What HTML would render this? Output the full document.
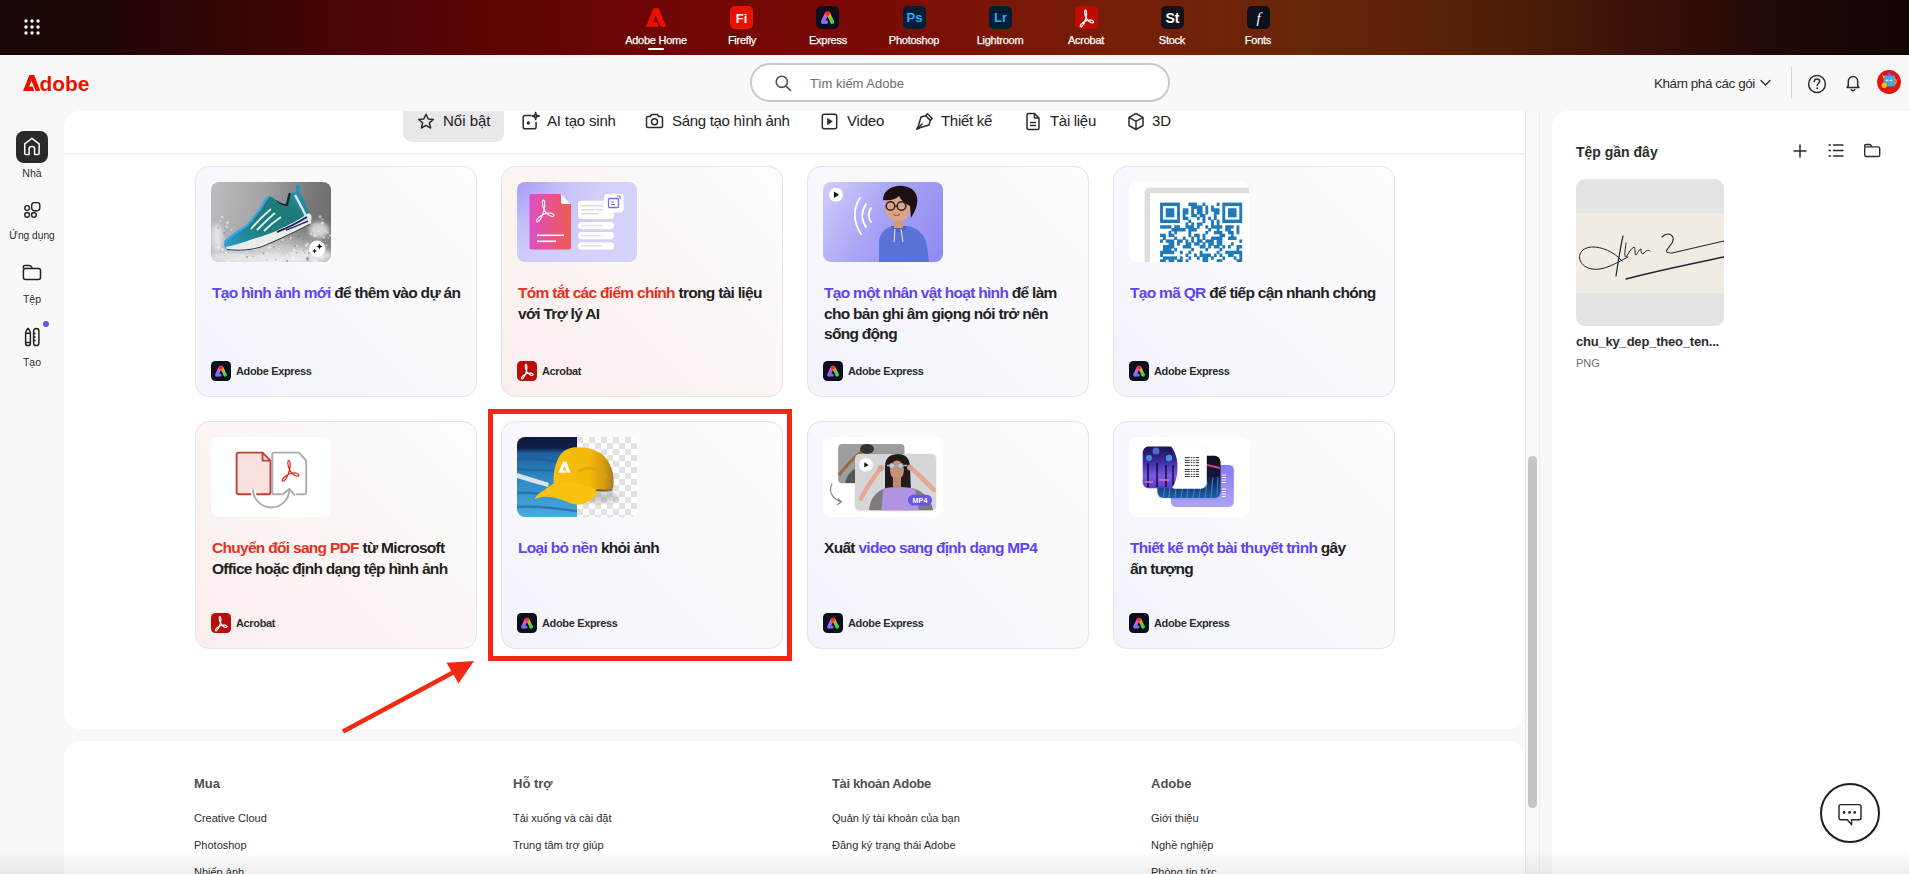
<!DOCTYPE html>
<html><head><meta charset="utf-8">
<style>
*{box-sizing:border-box;margin:0;padding:0}
html,body{width:1909px;height:874px;overflow:hidden;background:#f8f8f8;font-family:"Liberation Sans",sans-serif;color:#222}
.abs{position:absolute}
#topbar{position:absolute;left:0;top:0;width:1909px;height:55px;
background:linear-gradient(90deg,#1a0707 0px,#1e0606 100px,#300505 200px,#4a0404 350px,#5e0505 500px,#6e0606 650px,#7a0906 850px,#7a1606 1000px,#742008 1150px,#682608 1300px,#582008 1450px,#481a08 1550px,#381008 1650px,#240a06 1750px,#180606 1850px,#140505 1909px)}
.app{position:absolute;top:0;width:86px;height:55px;text-align:center;color:#fff;font-size:11px}
.app .ic{position:absolute;left:32px;top:6px;width:22px;height:22px;border-radius:5px}
.app .lb{position:absolute;left:0;right:0;top:34px;font-size:11px;letter-spacing:-0.25px;-webkit-text-stroke:0.25px #fff}
#header{position:absolute;left:0;top:55px;width:1909px;height:56px;background:#f8f8f8}
#sidebar{position:absolute;left:0;top:111px;width:64px;height:763px;background:#f8f8f8}
.side{position:absolute;left:0;width:64px;text-align:center;font-size:11px;color:#2c2c2c}
#main{position:absolute;left:64px;top:111px;width:1461px;height:618px;background:#fff;border-radius:16px 0 16px 16px}
#foot{position:absolute;left:64px;top:741px;width:1461px;height:200px;background:#fff;border-radius:16px 16px 0 0}
#right{position:absolute;left:1552px;top:111px;width:357px;height:763px;background:#fff;border-radius:16px 0 0 0}
.card{position:absolute;width:282px;border:1px solid #e3e3e8;border-radius:14px;overflow:hidden}
.card.ex{background:linear-gradient(225deg,#fdfdff 0%,#f8f8fd 50%,#f3f3fc 100%)}
.card.ac{background:linear-gradient(225deg,#fefdfd 0%,#fbf5f4 50%,#f9eeed 100%)}
.card .thumb{position:absolute;left:15px;top:15px;width:120px;height:80px;border-radius:8px;overflow:hidden}
.card .title{position:absolute;left:16px;top:116px;width:270px;white-space:nowrap;font-size:15.5px;line-height:20.5px;font-weight:bold;color:#222;letter-spacing:-0.7px}
.card .appl{position:absolute;left:15px;bottom:15px;height:20px;font-size:11px;font-weight:bold;color:#2c2c2c;line-height:20px}
.card .appl .ai{position:absolute;left:0;top:0}
.card .appl span{position:absolute;left:25px;top:0;white-space:nowrap;letter-spacing:-0.35px}
.pu{color:#5c46f3}
.rd{color:#e5311d}
.tab{position:absolute;top:111px;height:31px;font-size:15px;color:#222;line-height:20px}
.fh{position:absolute;font-size:13px;font-weight:bold;color:#505050}
.fl{position:absolute;font-size:11px;color:#2c2c2c}
</style></head>
<body>
<svg width="0" height="0" style="position:absolute">
 <defs>
  <linearGradient id="gL" x1="0" y1="0" x2="0" y2="1"><stop offset="0" stop-color="#ff4fc8"/><stop offset="1" stop-color="#7f6bff"/></linearGradient>
  <linearGradient id="gR" x1="0" y1="0" x2="0" y2="1"><stop offset="0" stop-color="#ffb000"/><stop offset="1" stop-color="#2fd35a"/></linearGradient>
 </defs>
 <symbol id="icEx" viewBox="0 0 20 20">
  <rect x="0" y="0" width="20" height="20" rx="4.5" fill="#0b0f1d"/>
  <path d="M9.2 6.8 L5.9 13.8" stroke="url(#gL)" stroke-width="3.3" stroke-linecap="round"/>
  <path d="M10.8 6.8 L14.1 13.8" stroke="url(#gR)" stroke-width="3.3" stroke-linecap="round"/>
  <path d="M6 14 L9 14" stroke="#7f6bff" stroke-width="3.2" stroke-linecap="round"/>
  <circle cx="10" cy="6.6" r="2.1" fill="#ff2a2a"/>
  <circle cx="14.1" cy="13.8" r="1.7" fill="#3ad84f"/>
 </symbol>
 <symbol id="icAc" viewBox="0 0 20 20">
  <rect x="0" y="0" width="20" height="20" rx="4.5" fill="#b80f0a"/>
  <path transform="translate(4.2,3.4) scale(0.7) translate(-71,-23.5)" d="M77.8 23.5 C76.2 23.5 76.8 28.5 78.2 32 C79.8 36 84 39.5 86.8 39.2 C88.8 39 88 36.4 85 36 C81 35.5 75.5 37.5 72.5 41 C71 42.8 71 44.8 72.8 44 C75 43 77 38 78.4 33.5 C79.5 29.5 79.4 23.5 77.8 23.5 Z" fill="none" stroke="#fff" stroke-width="1.7" stroke-linejoin="round"/>
 </symbol>
</svg>
<div id="topbar">
 <svg class="abs" style="left:24px;top:19px" width="16" height="16" viewBox="0 0 16 16" fill="#fff">
  <circle cx="2" cy="2" r="1.7"/><circle cx="8" cy="2" r="1.7"/><circle cx="14" cy="2" r="1.7"/>
  <circle cx="2" cy="8" r="1.7"/><circle cx="8" cy="8" r="1.7"/><circle cx="14" cy="8" r="1.7"/>
  <circle cx="2" cy="14" r="1.7"/><circle cx="8" cy="14" r="1.7"/><circle cx="14" cy="14" r="1.7"/>
 </svg>
 <div class="app" style="left:613px">
  <svg class="abs" style="left:33px;top:8px" width="20" height="19" viewBox="0 0 20 18.6"><path fill="#eb1000" d="M0 18.6 L7.4 0 L12.8 0 L20 18.6 L14.6 18.6 L9.7 7.6 L7.0 14 L11 14 L12.6 18.6 Z"/></svg>
  <div class="lb">Adobe Home</div>
  <div class="abs" style="left:35px;top:48px;width:16px;height:2px;background:#fff;border-radius:1px"></div>
 </div>
 <div class="app" style="left:699px">
  <div class="ic" style="background:#eb1000;left:31px;width:23px;height:23px;border-radius:5px">
   <svg class="abs" style="left:0;top:0" width="23" height="23" viewBox="0 0 23 23"><text x="11.5" y="16.5" text-anchor="middle" font-family="Liberation Sans" font-weight="bold" font-size="13" fill="#fff">Fi</text></svg>
  </div>
  <div class="lb">Firefly</div>
 </div>
 <div class="app" style="left:785px">
  <svg class="abs" style="left:31px;top:6px" width="23" height="23" viewBox="0 0 20 20"><use href="#icEx"/></svg>
  <div class="lb">Express</div>
 </div>
 <div class="app" style="left:871px">
  <div class="ic" style="background:#001e36;left:32px;width:23px;height:23px">
   <svg class="abs" style="left:0;top:0" width="23" height="23" viewBox="0 0 23 23"><text x="11.5" y="16" text-anchor="middle" font-family="Liberation Sans" font-weight="bold" font-size="13" fill="#31a8ff">Ps</text></svg>
  </div>
  <div class="lb">Photoshop</div>
 </div>
 <div class="app" style="left:957px">
  <div class="ic" style="background:#001e36;left:32px;width:23px;height:23px">
   <svg class="abs" style="left:0;top:0" width="23" height="23" viewBox="0 0 23 23"><text x="11.5" y="16" text-anchor="middle" font-family="Liberation Sans" font-weight="bold" font-size="13" fill="#31a8ff">Lr</text></svg>
  </div>
  <div class="lb">Lightroom</div>
 </div>
 <div class="app" style="left:1043px">
  <div class="ic" style="background:#c00c00;left:32px;width:23px;height:23px">
   <svg class="abs" style="left:0;top:0" width="23" height="23" viewBox="0 0 23 23"><path transform="translate(5,4.2) scale(0.8) translate(-71,-23.5)" d="M77.8 23.5 C76.2 23.5 76.8 28.5 78.2 32 C79.8 36 84 39.5 86.8 39.2 C88.8 39 88 36.4 85 36 C81 35.5 75.5 37.5 72.5 41 C71 42.8 71 44.8 72.8 44 C75 43 77 38 78.4 33.5 C79.5 29.5 79.4 23.5 77.8 23.5 Z" fill="none" stroke="#fff" stroke-width="1.6" stroke-linejoin="round"/></svg>
  </div>
  <div class="lb">Acrobat</div>
 </div>
 <div class="app" style="left:1129px">
  <div class="ic" style="background:#12141a;left:32px;width:23px;height:23px">
   <svg class="abs" style="left:0;top:0" width="23" height="23" viewBox="0 0 23 23"><text x="11.5" y="16.5" text-anchor="middle" font-family="Liberation Sans" font-weight="bold" font-size="14" fill="#fff">St</text></svg>
  </div>
  <div class="lb">Stock</div>
 </div>
 <div class="app" style="left:1215px">
  <div class="ic" style="background:#0c0f1c;left:32px;width:23px;height:23px">
   <svg class="abs" style="left:0;top:0" width="23" height="23" viewBox="0 0 23 23"><text x="11.5" y="17" text-anchor="middle" font-family="Liberation Serif" font-style="italic" font-size="15" fill="#fff">f</text></svg>
  </div>
  <div class="lb">Fonts</div>
 </div>
</div>
<div id="header">
 <svg class="abs" style="left:23px;top:20px" width="67" height="17" viewBox="0 0 67 17">
  <path fill="#eb1000" d="M0 16 L6.3 0 L11.2 0 L17.3 16 L12.7 16 L8.4 5.8 L6.3 11.4 L9.6 11.4 L11.2 16 Z"/>
  <text x="16.5" y="16" font-family="Liberation Sans" font-weight="bold" font-size="21" fill="#eb1000" textLength="50" lengthAdjust="spacingAndGlyphs">dobe</text>
 </svg>
 <div class="abs" style="left:750px;top:8px;width:420px;height:39px;border:2px solid #c9c9c9;border-radius:20px;background:#fff"></div>
 <svg class="abs" style="left:775px;top:20px" width="17" height="17" viewBox="0 0 17 17"><circle cx="6.8" cy="6.8" r="5.6" fill="none" stroke="#505050" stroke-width="1.6"/><path d="M10.8 10.8 L15.5 15.5" stroke="#505050" stroke-width="1.7" stroke-linecap="round"/></svg>
 <div class="abs" style="left:810px;top:21px;font-size:13px;color:#6d6d6d;line-height:16px">Tìm kiếm Adobe</div>
 <div class="abs" style="left:1654px;top:21px;font-size:13.5px;color:#2c2c2c;line-height:16px;letter-spacing:-0.45px">Khám phá các gói</div>
 <svg class="abs" style="left:1760px;top:24px" width="11" height="8" viewBox="0 0 11 8"><path d="M1 1.5 L5.5 6 L10 1.5" fill="none" stroke="#2c2c2c" stroke-width="1.4" stroke-linecap="round" stroke-linejoin="round"/></svg>
 <div class="abs" style="left:1791px;top:12px;width:1px;height:32px;background:#d5d5d5"></div>
 <svg class="abs" style="left:1807px;top:19px" width="20" height="20" viewBox="0 0 20 20"><circle cx="10" cy="10" r="8.4" fill="none" stroke="#2c2c2c" stroke-width="1.5"/><path d="M7.3 7.6 C7.3 5.9 8.5 5 10 5 C11.6 5 12.7 6 12.7 7.4 C12.7 9.2 10.2 9.4 10.2 11.5" fill="none" stroke="#2c2c2c" stroke-width="1.5" stroke-linecap="round"/><circle cx="10.2" cy="14.3" r="1" fill="#2c2c2c"/></svg>
 <svg class="abs" style="left:1844px;top:19px" width="18" height="18" viewBox="0 0 18 18"><path d="M3 13.5 L4.3 11.8 L4.3 7.5 C4.3 4.7 6.3 2.6 9 2.6 C11.7 2.6 13.7 4.7 13.7 7.5 L13.7 11.8 L15 13.5 Z" fill="none" stroke="#2c2c2c" stroke-width="1.5" stroke-linejoin="round"/><path d="M7.2 15.5 C7.5 16.4 8.2 16.8 9 16.8 C9.8 16.8 10.5 16.4 10.8 15.5" fill="none" stroke="#2c2c2c" stroke-width="1.4" stroke-linecap="round"/></svg>
 <svg class="abs" style="left:1877px;top:15px" width="24" height="24" viewBox="0 0 24 24">
  <circle cx="12" cy="12" r="11.9" fill="#e8120c"/>
  <path d="M7.5 5.5 L16.5 5.5 C17.5 5.5 18 6 18 7 L18 15 C18 16 17.5 16.5 16.5 16.5 L8 16.5 C7 16.5 6.5 16 6.5 15 L6.5 6.5 C6.5 6 7 5.5 7.5 5.5 Z" fill="#49a6da"/>
  <path d="M10 5.8 C10 3.5 11 2.5 12.2 2.5 C13.4 2.5 14.5 3.5 14.5 5.8 Z" fill="#6a58f0"/>
  <path d="M9 11 C9.5 10 10.5 10 11 11 M13 11 C13.5 10 14.5 10 15 11" stroke="#efe6ff" stroke-width="1.3" fill="none"/>
  <path d="M4.5 15 C4.5 13 6 12.5 7.5 12.8 C9.5 13.2 10.5 15 9.5 17 C8.5 18.5 5.5 18.5 4.8 16.8 Z" fill="#f5c400"/>
  <path d="M5.2 4.5 L8 7 L6.2 8.5 Z" fill="#f5c400"/>
  <path d="M18 9 C19.5 10 19.5 13 18 14" stroke="#f5c400" stroke-width="1.2" fill="none"/>
 </svg>
</div>
<div id="sidebar">
 <div class="abs" style="left:16px;top:20px;width:32px;height:32px;border-radius:8px;background:#2a2a2a"></div>
 <svg class="abs" style="left:16px;top:20px" width="32" height="32" viewBox="0 0 32 32"><path d="M8.7 12.9 L15.9 7.3 L23.1 12.9 L23.1 22.2 C23.1 23 22.6 23.5 21.8 23.5 L18.6 23.5 L18.6 17.4 C18.6 16.1 17.6 15.4 15.9 15.4 C14.2 15.4 13.1 16.1 13.1 17.4 L13.1 23.5 L10 23.5 C9.2 23.5 8.7 23 8.7 22.2 Z" fill="none" stroke="#fff" stroke-width="1.5" stroke-linejoin="round"/></svg>
 <div class="side" style="top:56px;font-size:10.5px">Nhà</div>
 <svg class="abs" style="left:16px;top:85px" width="32" height="28" viewBox="0 0 32 28" fill="none" stroke="#222" stroke-width="1.4"><circle cx="11.1" cy="12" r="2.35"/><rect x="15.7" y="6.6" width="8.1" height="8.1" rx="2.6"/><circle cx="11.1" cy="18.9" r="2.35"/><circle cx="17.9" cy="18.9" r="2.35"/></svg>
 <div class="side" style="top:119px;font-size:10.2px">Ứng dụng</div>
 <svg class="abs" style="left:16px;top:147px" width="32" height="28" viewBox="0 0 32 28" fill="none" stroke="#222" stroke-width="1.5" stroke-linejoin="round"><path d="M7.4 10.6 L7.4 8.6 C7.4 7.8 7.9 7.4 8.7 7.4 L13.3 7.4 C14.3 7.4 15 7.9 15.5 8.8 L16.3 10.6"/><rect x="7.4" y="10.6" width="17.1" height="10.9" rx="2"/></svg>
 <div class="side" style="top:182px;font-size:10.5px">Tệp</div>
 <svg class="abs" style="left:16px;top:211px" width="36" height="28" viewBox="0 0 36 28" fill="none" stroke="#222" stroke-width="1.5" stroke-linejoin="round"><path d="M9.6 21.5 L9.6 11 C9.6 9.2 10.6 7.7 12 6.6 C13.4 7.7 14.4 9.2 14.4 11 L14.4 21.5 C14.4 22.8 13.4 23.6 12 23.6 C10.6 23.6 9.6 22.8 9.6 21.5 Z M9.6 11.2 L14.4 11.2 M9.6 20.4 L14.4 20.4"/><path d="M11.2 7.6 L12.6 6.2" stroke-width="1.8"/><rect x="17.6" y="6.6" width="5.3" height="17" rx="2.65"/><path d="M17.6 11.4 L19.6 11.4 M17.6 15 L19.6 15 M17.6 18.6 L19.6 18.6"/></svg>
 <div class="abs" style="left:43px;top:210px;width:6px;height:6px;border-radius:3px;background:#6052ee"></div>
 <div class="side" style="top:245px;font-size:10.5px">Tạo</div>
</div>
<div id="main">
 <div class="abs" style="left:0;top:42px;width:1461px;height:2px;background:linear-gradient(#ececec,#f7f7f7)"></div>
 <div class="abs" style="left:339px;top:0;width:101px;height:31px;background:#e8e8ea;border-radius:0 0 9px 9px"></div>
</div>
<!-- tabs -->
<svg class="abs" style="left:417px;top:113px" width="18" height="17" viewBox="0 0 18 17"><path d="M9 1.3 L11.2 6 L16.3 6.5 L12.4 9.9 L13.6 15 L9 12.3 L4.4 15 L5.6 9.9 L1.7 6.5 L6.8 6 Z" fill="none" stroke="#2c2c2c" stroke-width="1.5" stroke-linejoin="round"/></svg>
<div class="tab" style="left:443px">Nổi bật</div>
<svg class="abs" style="left:521px;top:111px" width="20" height="20" viewBox="0 0 20 20" fill="none" stroke="#2c2c2c" stroke-width="1.5" stroke-linejoin="round"><path d="M10.5 4.5 L4 4.5 C3 4.5 2.2 5.3 2.2 6.3 L2.2 16 C2.2 17 3 17.8 4 17.8 L13.3 17.8 C14.3 17.8 15.1 17 15.1 16 L15.1 11"/><path d="M14.6 1.5 L15.4 4.2 L18.2 5 L15.4 5.8 L14.6 8.5 L13.8 5.8 L11 5 L13.8 4.2 Z"/><circle cx="7.3" cy="12" r="0.9" fill="#2c2c2c"/></svg>
<div class="tab" style="left:547px;letter-spacing:-0.2px">AI tạo sinh</div>
<svg class="abs" style="left:645px;top:113px" width="19" height="16" viewBox="0 0 19 16" fill="none" stroke="#2c2c2c" stroke-width="1.5" stroke-linejoin="round"><path d="M1.5 5 C1.5 4 2.2 3.5 3 3.5 L5.3 3.5 L6.6 1.5 L12.4 1.5 L13.7 3.5 L16 3.5 C16.8 3.5 17.5 4 17.5 5 L17.5 13 C17.5 14 16.8 14.5 16 14.5 L3 14.5 C2.2 14.5 1.5 14 1.5 13 Z"/><circle cx="9.5" cy="8.7" r="3"/></svg>
<div class="tab" style="left:672px;letter-spacing:-0.3px">Sáng tạo hình ảnh</div>
<svg class="abs" style="left:821px;top:113px" width="17" height="17" viewBox="0 0 17 17"><rect x="1.3" y="1.3" width="14.4" height="14.4" rx="2" fill="none" stroke="#2c2c2c" stroke-width="1.5"/><path d="M6.2 4.8 L11.8 8.5 L6.2 12.2 Z" fill="#2c2c2c"/></svg>
<div class="tab" style="left:847px;letter-spacing:-0.2px">Video</div>
<svg class="abs" style="left:915px;top:112px" width="19" height="19" viewBox="0 0 19 19" fill="none" stroke="#2c2c2c" stroke-width="1.5" stroke-linejoin="round"><path d="M12.5 1.8 L17.2 6.5 L15.3 8.4 L14 13 L5.5 15.5 L1.8 17.2 L3.5 13.5 L6 5 L10.6 3.7 Z"/><path d="M1.8 17.2 L7.5 11.5"/><path d="M10.6 3.7 L15.3 8.4"/></svg>
<div class="tab" style="left:941px;letter-spacing:-0.3px">Thiết kế</div>
<svg class="abs" style="left:1025px;top:112px" width="16" height="19" viewBox="0 0 16 19" fill="none" stroke="#2c2c2c" stroke-width="1.5" stroke-linejoin="round"><path d="M2 3 C2 2.2 2.6 1.5 3.5 1.5 L9.5 1.5 L14 6 L14 16 C14 16.8 13.4 17.5 12.5 17.5 L3.5 17.5 C2.6 17.5 2 16.8 2 16 Z"/><path d="M9.5 1.5 L9.5 6 L14 6"/><path d="M5 10.5 L11 10.5 M5 13.5 L11 13.5"/></svg>
<div class="tab" style="left:1050px;letter-spacing:-0.3px">Tài liệu</div>
<svg class="abs" style="left:1127px;top:112px" width="18" height="19" viewBox="0 0 18 19" fill="none" stroke="#2c2c2c" stroke-width="1.5" stroke-linejoin="round"><path d="M9 1.5 L16 5.3 L16 13.5 L9 17.5 L2 13.5 L2 5.3 Z"/><path d="M2 5.3 L9 9.3 L16 5.3 M9 9.3 L9 17.5"/></svg>
<div class="tab" style="left:1152px">3D</div>

<!-- cards row 1 -->
<div class="card ex" style="left:195px;top:166px;height:231px">
 <div class="thumb" style="background:linear-gradient(100deg,#bdbdc0 0%,#a4a4a7 40%,#7a7a7d 75%,#6a6a6c 100%)">
  <svg width="120" height="80" viewBox="0 0 120 80">
   <defs>
    <radialGradient id="spl" cx="0.55" cy="1.05" r="0.75"><stop offset="0" stop-color="#f2f2f2"/><stop offset="0.45" stop-color="#d0d0d2" stop-opacity="0.85"/><stop offset="1" stop-color="#a0a0a2" stop-opacity="0"/></radialGradient>
    <linearGradient id="shu" x1="0" y1="1" x2="1" y2="0"><stop offset="0" stop-color="#2a9fe0"/><stop offset="0.35" stop-color="#1e7f7c"/><stop offset="0.7" stop-color="#1f7a78"/><stop offset="1" stop-color="#2aa3df"/></linearGradient>
   </defs>
   <rect x="0" y="25" width="120" height="55" fill="url(#spl)"/>
   <g filter="url(#blr)" fill="#ececee" opacity="0.8"><ellipse cx="6" cy="56" rx="6" ry="14"/><ellipse cx="20" cy="76" rx="22" ry="6"/><ellipse cx="108" cy="48" rx="10" ry="8"/><ellipse cx="100" cy="74" rx="22" ry="7"/><ellipse cx="60" cy="78" rx="30" ry="5"/></g><filter id="blr"><feGaussianBlur stdDeviation="2.2"/></filter>
   <g><circle cx="28.6" cy="57.2" r="0.8" fill="#f4f4f6" opacity="0.68"/><circle cx="1.6" cy="71.9" r="0.7" fill="#f4f4f6" opacity="0.48"/><circle cx="119.5" cy="53.5" r="1.4" fill="#f4f4f6" opacity="0.61"/><circle cx="76.2" cy="73.4" r="1.0" fill="#f4f4f6" opacity="0.76"/><circle cx="91.0" cy="59.6" r="0.8" fill="#f4f4f6" opacity="0.37"/><circle cx="103.9" cy="53.6" r="1.3" fill="#f4f4f6" opacity="0.83"/><circle cx="85.7" cy="76.1" r="0.9" fill="#f4f4f6" opacity="0.79"/><circle cx="53.4" cy="76.8" r="1.5" fill="#f4f4f6" opacity="0.40"/><circle cx="16.3" cy="40.8" r="1.6" fill="#f4f4f6" opacity="0.59"/><circle cx="42.1" cy="59.3" r="1.1" fill="#f4f4f6" opacity="0.85"/><circle cx="81.8" cy="76.4" r="1.4" fill="#f4f4f6" opacity="0.90"/><circle cx="103.3" cy="78.2" r="1.5" fill="#f4f4f6" opacity="0.66"/><circle cx="99.8" cy="58.7" r="0.7" fill="#f4f4f6" opacity="0.38"/><circle cx="102.5" cy="79.5" r="0.5" fill="#f4f4f6" opacity="0.79"/><circle cx="35.3" cy="68.4" r="1.4" fill="#f4f4f6" opacity="0.37"/><circle cx="105.7" cy="79.0" r="1.0" fill="#f4f4f6" opacity="0.90"/><circle cx="23.7" cy="50.4" r="1.1" fill="#f4f4f6" opacity="0.44"/><circle cx="5.1" cy="73.4" r="0.8" fill="#f4f4f6" opacity="0.88"/><circle cx="107.6" cy="48.9" r="1.0" fill="#f4f4f6" opacity="0.64"/><circle cx="77.3" cy="59.8" r="1.1" fill="#f4f4f6" opacity="0.69"/><circle cx="112.9" cy="55.4" r="0.9" fill="#f4f4f6" opacity="0.75"/><circle cx="117.3" cy="56.1" r="1.1" fill="#f4f4f6" opacity="0.36"/><circle cx="49.8" cy="59.0" r="0.4" fill="#f4f4f6" opacity="0.69"/><circle cx="75.3" cy="53.3" r="1.2" fill="#f4f4f6" opacity="0.54"/><circle cx="84.8" cy="66.9" r="0.4" fill="#f4f4f6" opacity="0.38"/><circle cx="81.1" cy="78.2" r="0.7" fill="#f4f4f6" opacity="0.60"/><circle cx="44.3" cy="59.8" r="0.8" fill="#f4f4f6" opacity="0.56"/><circle cx="68.3" cy="66.8" r="0.8" fill="#f4f4f6" opacity="0.47"/><circle cx="96.5" cy="41.9" r="0.6" fill="#f4f4f6" opacity="0.59"/><circle cx="100.0" cy="51.9" r="1.4" fill="#f4f4f6" opacity="0.44"/><circle cx="40.4" cy="62.5" r="1.5" fill="#f4f4f6" opacity="0.60"/><circle cx="96.8" cy="71.9" r="0.6" fill="#f4f4f6" opacity="0.50"/><circle cx="96.9" cy="62.1" r="1.4" fill="#f4f4f6" opacity="0.54"/><circle cx="15.6" cy="44.6" r="1.4" fill="#f4f4f6" opacity="0.50"/><circle cx="41.6" cy="50.8" r="0.9" fill="#f4f4f6" opacity="0.58"/><circle cx="110.5" cy="37.8" r="0.4" fill="#f4f4f6" opacity="0.87"/><circle cx="105.6" cy="79.3" r="0.9" fill="#f4f4f6" opacity="0.87"/><circle cx="111.3" cy="41.1" r="1.3" fill="#f4f4f6" opacity="0.81"/><circle cx="79.6" cy="56.0" r="0.7" fill="#f4f4f6" opacity="0.54"/><circle cx="97.2" cy="32.3" r="1.5" fill="#f4f4f6" opacity="0.73"/><circle cx="110.9" cy="74.8" r="1.5" fill="#f4f4f6" opacity="0.67"/><circle cx="1.6" cy="67.3" r="0.6" fill="#f4f4f6" opacity="0.51"/><circle cx="79.5" cy="56.2" r="0.9" fill="#f4f4f6" opacity="0.87"/><circle cx="30.3" cy="73.1" r="1.0" fill="#f4f4f6" opacity="0.78"/><circle cx="64.2" cy="70.8" r="0.6" fill="#f4f4f6" opacity="0.79"/><circle cx="110.6" cy="70.3" r="1.4" fill="#f4f4f6" opacity="0.35"/><circle cx="75.4" cy="73.1" r="0.5" fill="#f4f4f6" opacity="0.50"/><circle cx="32.2" cy="56.4" r="0.9" fill="#f4f4f6" opacity="0.61"/><circle cx="6.6" cy="36.3" r="0.5" fill="#f4f4f6" opacity="0.39"/><circle cx="117.0" cy="72.7" r="0.5" fill="#f4f4f6" opacity="0.63"/><circle cx="42.2" cy="62.3" r="1.1" fill="#f4f4f6" opacity="0.55"/><circle cx="22.9" cy="46.4" r="0.5" fill="#f4f4f6" opacity="0.66"/><circle cx="9.6" cy="38.9" r="0.8" fill="#f4f4f6" opacity="0.68"/><circle cx="96.1" cy="61.1" r="0.9" fill="#f4f4f6" opacity="0.55"/><circle cx="59.5" cy="65.1" r="0.9" fill="#f4f4f6" opacity="0.73"/><circle cx="64.3" cy="64.8" r="0.5" fill="#f4f4f6" opacity="0.58"/><circle cx="51.1" cy="74.0" r="1.5" fill="#f4f4f6" opacity="0.56"/><circle cx="107.7" cy="69.5" r="0.7" fill="#f4f4f6" opacity="0.61"/><circle cx="14.8" cy="70.7" r="1.2" fill="#f4f4f6" opacity="0.84"/><circle cx="95.1" cy="63.4" r="1.3" fill="#f4f4f6" opacity="0.66"/><circle cx="12.4" cy="59.4" r="0.4" fill="#f4f4f6" opacity="0.43"/><circle cx="11.0" cy="35.0" r="1.5" fill="#f4f4f6" opacity="0.45"/><circle cx="2.8" cy="72.1" r="0.5" fill="#f4f4f6" opacity="0.81"/><circle cx="80.8" cy="71.8" r="1.5" fill="#f4f4f6" opacity="0.67"/><circle cx="95.8" cy="31.8" r="1.3" fill="#f4f4f6" opacity="0.63"/><circle cx="89.9" cy="76.7" r="0.5" fill="#f4f4f6" opacity="0.53"/><circle cx="67.7" cy="71.4" r="0.7" fill="#f4f4f6" opacity="0.45"/><circle cx="30.0" cy="60.8" r="1.3" fill="#f4f4f6" opacity="0.57"/><circle cx="42.0" cy="50.9" r="0.5" fill="#f4f4f6" opacity="0.63"/><circle cx="116.8" cy="50.6" r="1.3" fill="#f4f4f6" opacity="0.44"/><circle cx="82.9" cy="67.8" r="1.2" fill="#f4f4f6" opacity="0.63"/><circle cx="58.0" cy="62.1" r="1.5" fill="#f4f4f6" opacity="0.43"/><circle cx="11.5" cy="67.4" r="1.5" fill="#f4f4f6" opacity="0.63"/><circle cx="53.2" cy="65.9" r="0.6" fill="#f4f4f6" opacity="0.50"/><circle cx="23.9" cy="59.3" r="0.8" fill="#f4f4f6" opacity="0.48"/><circle cx="82.9" cy="77.7" r="0.8" fill="#f4f4f6" opacity="0.74"/><circle cx="49.6" cy="72.7" r="1.1" fill="#f4f4f6" opacity="0.50"/><circle cx="20.7" cy="48.0" r="0.8" fill="#f4f4f6" opacity="0.78"/><circle cx="17.2" cy="79.6" r="1.0" fill="#f4f4f6" opacity="0.68"/><circle cx="56.2" cy="71.7" r="1.4" fill="#f4f4f6" opacity="0.66"/><circle cx="57.8" cy="66.0" r="1.4" fill="#f4f4f6" opacity="0.57"/><circle cx="88.0" cy="78.0" r="1.0" fill="#f4f4f6" opacity="0.48"/><circle cx="28.2" cy="65.9" r="1.2" fill="#f4f4f6" opacity="0.88"/><circle cx="102.5" cy="42.1" r="0.6" fill="#f4f4f6" opacity="0.49"/><circle cx="22.5" cy="65.2" r="1.4" fill="#f4f4f6" opacity="0.84"/><circle cx="30.6" cy="73.3" r="0.8" fill="#f4f4f6" opacity="0.58"/><circle cx="11.1" cy="71.7" r="0.8" fill="#f4f4f6" opacity="0.55"/><circle cx="69.6" cy="63.8" r="0.4" fill="#f4f4f6" opacity="0.53"/><circle cx="52.3" cy="54.3" r="0.7" fill="#f4f4f6" opacity="0.67"/><circle cx="114.6" cy="49.5" r="1.1" fill="#f4f4f6" opacity="0.42"/><circle cx="33.0" cy="63.3" r="0.5" fill="#f4f4f6" opacity="0.84"/><circle cx="109.1" cy="34.8" r="1.5" fill="#f4f4f6" opacity="0.56"/><circle cx="92.7" cy="67.9" r="0.8" fill="#f4f4f6" opacity="0.72"/><circle cx="78.5" cy="70.3" r="0.7" fill="#f4f4f6" opacity="0.76"/><circle cx="115.4" cy="63.6" r="1.0" fill="#f4f4f6" opacity="0.41"/><circle cx="86.2" cy="63.9" r="1.1" fill="#f4f4f6" opacity="0.45"/><circle cx="77.5" cy="61.5" r="0.6" fill="#f4f4f6" opacity="0.84"/><circle cx="111.8" cy="37.1" r="0.8" fill="#f4f4f6" opacity="0.75"/><circle cx="71.7" cy="57.7" r="1.2" fill="#f4f4f6" opacity="0.60"/><circle cx="8.2" cy="65.8" r="1.3" fill="#f4f4f6" opacity="0.65"/><circle cx="31.9" cy="58.4" r="1.4" fill="#707074" opacity="0.5"/><circle cx="5.1" cy="62.7" r="0.7" fill="#707074" opacity="0.5"/><circle cx="92.3" cy="57.4" r="0.8" fill="#707074" opacity="0.5"/><circle cx="48.4" cy="64.0" r="1.3" fill="#707074" opacity="0.5"/><circle cx="42.3" cy="74.6" r="0.6" fill="#707074" opacity="0.5"/><circle cx="32.5" cy="48.5" r="0.6" fill="#707074" opacity="0.5"/><circle cx="93.5" cy="70.5" r="0.7" fill="#707074" opacity="0.5"/><circle cx="22.7" cy="59.6" r="1.2" fill="#707074" opacity="0.5"/><circle cx="97.9" cy="71.2" r="1.1" fill="#707074" opacity="0.5"/><circle cx="17.6" cy="58.9" r="0.7" fill="#707074" opacity="0.5"/><circle cx="63.3" cy="64.9" r="0.7" fill="#707074" opacity="0.5"/><circle cx="30.0" cy="72.4" r="0.5" fill="#707074" opacity="0.5"/><circle cx="96.4" cy="76.2" r="1.4" fill="#707074" opacity="0.5"/><circle cx="46.0" cy="64.3" r="1.1" fill="#707074" opacity="0.5"/><circle cx="76.0" cy="79.2" r="1.2" fill="#707074" opacity="0.5"/><circle cx="35.9" cy="75.1" r="1.0" fill="#707074" opacity="0.5"/><circle cx="72.2" cy="70.4" r="0.5" fill="#707074" opacity="0.5"/><circle cx="92.5" cy="68.2" r="1.0" fill="#707074" opacity="0.5"/><circle cx="62.8" cy="61.1" r="0.7" fill="#707074" opacity="0.5"/><circle cx="63.5" cy="46.3" r="1.0" fill="#707074" opacity="0.5"/><circle cx="77.5" cy="60.5" r="1.1" fill="#707074" opacity="0.5"/><circle cx="115.1" cy="76.2" r="0.6" fill="#707074" opacity="0.5"/><circle cx="95.1" cy="66.8" r="0.6" fill="#707074" opacity="0.5"/><circle cx="43.2" cy="53.2" r="0.6" fill="#707074" opacity="0.5"/><circle cx="64.7" cy="77.5" r="0.8" fill="#707074" opacity="0.5"/><circle cx="104.5" cy="69.3" r="0.6" fill="#707074" opacity="0.5"/><circle cx="103.0" cy="66.0" r="1.4" fill="#707074" opacity="0.5"/><circle cx="85.9" cy="70.9" r="0.8" fill="#707074" opacity="0.5"/><circle cx="96.8" cy="77.6" r="1.4" fill="#707074" opacity="0.5"/><circle cx="52.4" cy="71.5" r="1.0" fill="#707074" opacity="0.5"/><circle cx="13.1" cy="46.5" r="0.6" fill="#707074" opacity="0.5"/><circle cx="24.0" cy="50.6" r="1.0" fill="#707074" opacity="0.5"/><circle cx="83.9" cy="63.8" r="0.9" fill="#707074" opacity="0.5"/><circle cx="77.9" cy="55.7" r="1.0" fill="#707074" opacity="0.5"/><circle cx="90.9" cy="59.1" r="0.7" fill="#707074" opacity="0.5"/><circle cx="107.9" cy="70.2" r="0.9" fill="#707074" opacity="0.5"/><circle cx="44.5" cy="63.5" r="1.1" fill="#707074" opacity="0.5"/><circle cx="26.9" cy="45.1" r="0.7" fill="#707074" opacity="0.5"/><circle cx="94.0" cy="50.0" r="1.0" fill="#707074" opacity="0.5"/><circle cx="23.4" cy="52.3" r="0.7" fill="#707074" opacity="0.5"/><circle cx="48.4" cy="50.9" r="0.5" fill="#707074" opacity="0.5"/><circle cx="13.2" cy="50.9" r="1.0" fill="#707074" opacity="0.5"/><circle cx="7.2" cy="45.8" r="0.9" fill="#707074" opacity="0.5"/><circle cx="48.9" cy="69.6" r="0.6" fill="#707074" opacity="0.5"/><circle cx="48.4" cy="58.9" r="0.5" fill="#707074" opacity="0.5"/><circle cx="115.9" cy="52.7" r="0.6" fill="#707074" opacity="0.5"/><circle cx="57.0" cy="50.8" r="1.1" fill="#707074" opacity="0.5"/><circle cx="41.6" cy="49.3" r="0.6" fill="#707074" opacity="0.5"/><circle cx="87.3" cy="54.6" r="1.3" fill="#707074" opacity="0.5"/><circle cx="55.8" cy="77.7" r="0.8" fill="#707074" opacity="0.5"/></g>
   <path d="M13.3 63.2 C13 60 14 58 15 57.5 C22 52 30 48 36.6 43 C42 37 46 31 49.4 27.5 C52 22 55 17 57.7 14.6 C60 14.5 63 16.5 64 17.4 C68 20 72 22 75 22 C76 18 77 13 77.8 11 L85 10.5 L85 2.7 L89.7 3.7 L88.5 11 C92 14 95 22 97 28 C99 31 100.5 33 100.7 34.8 L99.8 42.1 C90 47 80 52 73.2 54.9 C62 60 52 65 45.8 67.7 C36 69 26 69.5 18.3 68.7 C15.5 67.5 13.8 65.5 13.3 63.2 Z" fill="url(#shu)"/>
   <path d="M14 60 C22 52 30 48 36.6 43 C42 37 46 31 49.4 27.5 C52 22 55 17 57.7 14.6" stroke="#2fa6ea" stroke-width="2.2" fill="none"/>
   <path d="M64 17.4 C68 20 72 22 75 22 C76 18 77 13 77.8 11 L80 11 C79 15 78 20 77 24 C72 24 67 21 64 17.4 Z" fill="#1b2430"/>
   <path d="M15 65 C25 63 35 59 45 56 C55 53 60 51 64 49.4 C76 44 88 38 96 32 C98 30 100 32 100.7 34.8 L99.8 42.1 C90 47 80 52 73.2 54.9 C62 60 52 65 45.8 67.7 C36 69 26 69.5 18.3 68.7 C16 67.8 15 66 15 64 Z" fill="#e9ebec"/>
   <path d="M66 50 C76 46 88 40 96 35" stroke="#1b2660" stroke-width="2" fill="none"/>
   <path d="M75 48 C84 45 92 41 97 39" stroke="#22305a" stroke-width="1.4" fill="none"/>
   <path d="M16 67.5 C28 69 40 68 50 65 C62 60 78 53 99 42" stroke="#2a3440" stroke-width="1" fill="none"/>
   <path d="M40 47 C46 40 54 32 60 27 M46 48 C52 42 58 36 64 31 M53 49 C58 44 64 39 70 35" stroke="#e4eef0" stroke-width="1.8" fill="none"/>
   <path d="M84 13 C88 20 92 28 95 34" stroke="#dfe6e8" stroke-width="2.5" fill="none"/>
   <circle cx="106.2" cy="66.8" r="8.2" fill="#fff"/>
   <path d="M108.5 61.5 L109.4 63.6 L111.5 64.5 L109.4 65.4 L108.5 67.5 L107.6 65.4 L105.5 64.5 L107.6 63.6 Z" fill="#111"/>
   <path d="M103.5 66.5 L104.2 68.3 L106 69 L104.2 69.7 L103.5 71.5 L102.8 69.7 L101 69 L102.8 68.3 Z" fill="#111"/>
  </svg>
 </div>
 <div class="title"><span class="pu">Tạo hình ảnh mới</span> để thêm vào dự án</div>
 <div class="appl"><svg class="ai" width="20" height="20"><use href="#icEx"/></svg><span>Adobe Express</span></div>
</div>

<div class="card ac" style="left:501px;top:166px;height:231px">
 <div class="thumb" style="background:radial-gradient(circle at 0% 0%,#a79cf7 0%,#c4bff8 30%,#d3d0f9 60%,#d5d3fa 100%)">
  <svg width="120" height="80" viewBox="0 0 120 80">
   <defs><linearGradient id="pdg" x1="0" y1="0" x2="1" y2="0"><stop offset="0" stop-color="#df4fc6"/><stop offset="1" stop-color="#f05a52"/></linearGradient></defs>
   <path d="M14.5 12 L44 12 L54 22 L54 65.5 C54 66.8 53 67.5 52 67.5 L14.5 67.5 C13.3 67.5 12.5 66.8 12.5 65.5 L12.5 14 C12.5 12.8 13.3 12 14.5 12 Z" fill="url(#pdg)"/>
   <path d="M44 12 L54 22 L46 22 C44.8 22 44 21.2 44 20 Z" fill="#fff"/>
   <path transform="translate(19.2,18) scale(1.05) translate(-71,-23.5)" d="M77.8 23.5 C76.2 23.5 76.8 28.5 78.2 32 C79.8 36 84 39.5 86.8 39.2 C88.8 39 88 36.4 85 36 C81 35.5 75.5 37.5 72.5 41 C71 42.8 71 44.8 72.8 44 C75 43 77 38 78.4 33.5 C79.5 29.5 79.4 23.5 77.8 23.5 Z" fill="none" stroke="#fff" stroke-width="1.1" stroke-linejoin="round"/>
   <rect x="20" y="52.5" width="27" height="1.6" fill="#fff"/><rect x="20" y="58.5" width="19" height="1.6" fill="#fff"/>
   <rect x="61" y="18.7" width="36" height="18.3" rx="3" fill="#fff" opacity="0.95"/>
   <rect x="64" y="23" width="22" height="1.5" fill="#dedede"/><rect x="64" y="27" width="22" height="1.5" fill="#dedede"/><rect x="64" y="31" width="18" height="1.5" fill="#dedede"/>
   <rect x="61" y="39.9" width="36" height="7.3" rx="3.6" fill="#fff"/><rect x="64" y="42.8" width="22" height="1.5" fill="#e2e2e2"/>
   <rect x="61" y="50" width="36" height="7.3" rx="3.6" fill="#fff"/><rect x="64" y="52.9" width="20" height="1.5" fill="#e2e2e2"/>
   <rect x="61" y="60.2" width="36" height="7.3" rx="3.6" fill="#fff"/><rect x="64" y="63.1" width="21" height="1.5" fill="#e2e2e2"/>
   <rect x="87" y="11.8" width="19.7" height="18.8" rx="4" fill="#fff"/>
   <rect x="91.5" y="16.5" width="10" height="9" rx="1" fill="none" stroke="#7b6cf0" stroke-width="1.3"/>
   <path d="M94 20 L97 20 M94 22.5 L98 22.5 M100 14 L103 14 L103 17" stroke="#7b6cf0" stroke-width="1.1" fill="none"/>
  </svg>
 </div>
 <div class="title"><span class="rd">Tóm tắt các điểm chính</span> trong tài liệu<br>với Trợ lý AI</div>
 <div class="appl"><svg class="ai" width="20" height="20"><use href="#icAc"/></svg><span>Acrobat</span></div>
</div>

<div class="card ex" style="left:807px;top:166px;height:231px">
 <div class="thumb" style="background:linear-gradient(120deg,#d2cdfa 0%,#a9a4f5 45%,#8d8af2 100%)">
  <svg width="120" height="80" viewBox="0 0 120 80">
   <circle cx="13" cy="12.7" r="7" fill="#fff"/><path d="M11 9.5 L16 12.7 L11 15.9 Z" fill="#111"/>
   <path d="M37 16 C30 26 30 40 38 52 M43 22 C38 30 38 38 43 45 M48 26 C45 31 45 36 48 40" stroke="#fff" stroke-width="1.8" fill="none" stroke-linecap="round"/>
   <path d="M56 80 L56 60 C56 52 62 46 70 44 L85 44 C95 46 103 54 104 64 L106 80 Z" fill="#5b72d6"/>
   <path d="M68 44 C72 52 80 52 84 44" fill="#4d63c4"/>
   <path d="M72 47 L71 60 M78 47 L80 60" stroke="#e8e0d8" stroke-width="1.1"/>
   <rect x="71" y="36" width="9" height="10" fill="#d49a78"/>
   <ellipse cx="75" cy="25" rx="13" ry="14" fill="#dca282"/>
   <path d="M60 18 C60 8 70 3 80 4 C90 5 96 12 94 22 C93 28 90 32 88 36 L87 24 C82 22 78 18 76 14 C72 18 66 19 60 18 Z" fill="#1d1010"/>
   <circle cx="67.5" cy="24" r="4.3" fill="none" stroke="#222" stroke-width="1.5"/><circle cx="78.5" cy="24" r="4.3" fill="none" stroke="#222" stroke-width="1.5"/>
   <path d="M71.8 24 L74.2 24" stroke="#222" stroke-width="1.2"/>
   <path d="M70 32 C72 34 75 34 77 32" stroke="#8a4a3a" stroke-width="1" fill="none"/>
  </svg>
 </div>
 <div class="title"><span class="pu">Tạo một nhân vật hoạt hình</span> để làm<br>cho bản ghi âm giọng nói trở nên<br>sống động</div>
 <div class="appl"><svg class="ai" width="20" height="20"><use href="#icEx"/></svg><span>Adobe Express</span></div>
</div>

<div class="card ex" style="left:1113px;top:166px;height:231px">
 <div class="thumb" style="background:#fff">
  <svg width="120" height="80" viewBox="0 0 120 80">
   <path d="M15.6 82 L15.6 10.5 C15.6 7.5 17.5 5.5 20.5 5.5 L120 5.5 L120 11 L21 11 L21 82 Z" fill="#dedede"/>
   <g fill="#1f7ab8"><rect x="31.10" y="20.60" width="19.81" height="3.43"/><rect x="59.40" y="20.60" width="8.49" height="3.43"/><rect x="73.55" y="20.60" width="2.83" height="3.43"/><rect x="87.70" y="20.60" width="2.83" height="3.43"/><rect x="93.36" y="20.60" width="19.81" height="3.43"/><rect x="31.10" y="23.43" width="2.83" height="3.43"/><rect x="48.08" y="23.43" width="2.83" height="3.43"/><rect x="62.23" y="23.43" width="11.32" height="3.43"/><rect x="76.38" y="23.43" width="2.83" height="3.43"/><rect x="82.04" y="23.43" width="2.83" height="3.43"/><rect x="93.36" y="23.43" width="2.83" height="3.43"/><rect x="110.34" y="23.43" width="2.83" height="3.43"/><rect x="31.10" y="26.26" width="2.83" height="3.43"/><rect x="36.76" y="26.26" width="8.49" height="3.43"/><rect x="48.08" y="26.26" width="2.83" height="3.43"/><rect x="53.74" y="26.26" width="5.66" height="3.43"/><rect x="62.23" y="26.26" width="2.83" height="3.43"/><rect x="67.89" y="26.26" width="5.66" height="3.43"/><rect x="76.38" y="26.26" width="2.83" height="3.43"/><rect x="82.04" y="26.26" width="8.49" height="3.43"/><rect x="93.36" y="26.26" width="2.83" height="3.43"/><rect x="99.02" y="26.26" width="8.49" height="3.43"/><rect x="110.34" y="26.26" width="2.83" height="3.43"/><rect x="31.10" y="29.09" width="2.83" height="3.43"/><rect x="36.76" y="29.09" width="8.49" height="3.43"/><rect x="48.08" y="29.09" width="2.83" height="3.43"/><rect x="53.74" y="29.09" width="5.66" height="3.43"/><rect x="62.23" y="29.09" width="2.83" height="3.43"/><rect x="67.89" y="29.09" width="5.66" height="3.43"/><rect x="76.38" y="29.09" width="2.83" height="3.43"/><rect x="84.87" y="29.09" width="5.66" height="3.43"/><rect x="93.36" y="29.09" width="2.83" height="3.43"/><rect x="99.02" y="29.09" width="8.49" height="3.43"/><rect x="110.34" y="29.09" width="2.83" height="3.43"/><rect x="31.10" y="31.92" width="2.83" height="3.43"/><rect x="36.76" y="31.92" width="8.49" height="3.43"/><rect x="48.08" y="31.92" width="2.83" height="3.43"/><rect x="53.74" y="31.92" width="2.83" height="3.43"/><rect x="62.23" y="31.92" width="5.66" height="3.43"/><rect x="70.72" y="31.92" width="5.66" height="3.43"/><rect x="84.87" y="31.92" width="2.83" height="3.43"/><rect x="93.36" y="31.92" width="2.83" height="3.43"/><rect x="99.02" y="31.92" width="8.49" height="3.43"/><rect x="110.34" y="31.92" width="2.83" height="3.43"/><rect x="31.10" y="34.75" width="2.83" height="3.43"/><rect x="48.08" y="34.75" width="2.83" height="3.43"/><rect x="53.74" y="34.75" width="5.66" height="3.43"/><rect x="67.89" y="34.75" width="2.83" height="3.43"/><rect x="73.55" y="34.75" width="2.83" height="3.43"/><rect x="79.21" y="34.75" width="2.83" height="3.43"/><rect x="84.87" y="34.75" width="2.83" height="3.43"/><rect x="93.36" y="34.75" width="2.83" height="3.43"/><rect x="110.34" y="34.75" width="2.83" height="3.43"/><rect x="31.10" y="37.58" width="19.81" height="3.43"/><rect x="59.40" y="37.58" width="2.83" height="3.43"/><rect x="73.55" y="37.58" width="2.83" height="3.43"/><rect x="82.04" y="37.58" width="2.83" height="3.43"/><rect x="87.70" y="37.58" width="2.83" height="3.43"/><rect x="93.36" y="37.58" width="19.81" height="3.43"/><rect x="56.57" y="40.41" width="2.83" height="3.43"/><rect x="62.23" y="40.41" width="2.83" height="3.43"/><rect x="67.89" y="40.41" width="5.66" height="3.43"/><rect x="82.04" y="40.41" width="2.83" height="3.43"/><rect x="87.70" y="40.41" width="2.83" height="3.43"/><rect x="31.10" y="43.24" width="11.32" height="3.43"/><rect x="45.25" y="43.24" width="5.66" height="3.43"/><rect x="56.57" y="43.24" width="8.49" height="3.43"/><rect x="67.89" y="43.24" width="2.83" height="3.43"/><rect x="76.38" y="43.24" width="2.83" height="3.43"/><rect x="82.04" y="43.24" width="11.32" height="3.43"/><rect x="96.19" y="43.24" width="8.49" height="3.43"/><rect x="107.51" y="43.24" width="2.83" height="3.43"/><rect x="42.42" y="46.07" width="14.15" height="3.43"/><rect x="59.40" y="46.07" width="8.49" height="3.43"/><rect x="79.21" y="46.07" width="2.83" height="3.43"/><rect x="87.70" y="46.07" width="2.83" height="3.43"/><rect x="96.19" y="46.07" width="5.66" height="3.43"/><rect x="107.51" y="46.07" width="2.83" height="3.43"/><rect x="39.59" y="48.90" width="2.83" height="3.43"/><rect x="45.25" y="48.90" width="2.83" height="3.43"/><rect x="59.40" y="48.90" width="2.83" height="3.43"/><rect x="76.38" y="48.90" width="2.83" height="3.43"/><rect x="84.87" y="48.90" width="8.49" height="3.43"/><rect x="99.02" y="48.90" width="5.66" height="3.43"/><rect x="107.51" y="48.90" width="2.83" height="3.43"/><rect x="31.10" y="51.73" width="5.66" height="3.43"/><rect x="39.59" y="51.73" width="5.66" height="3.43"/><rect x="59.40" y="51.73" width="2.83" height="3.43"/><rect x="65.06" y="51.73" width="5.66" height="3.43"/><rect x="73.55" y="51.73" width="2.83" height="3.43"/><rect x="90.53" y="51.73" width="5.66" height="3.43"/><rect x="101.85" y="51.73" width="2.83" height="3.43"/><rect x="33.93" y="54.56" width="2.83" height="3.43"/><rect x="45.25" y="54.56" width="2.83" height="3.43"/><rect x="53.74" y="54.56" width="2.83" height="3.43"/><rect x="62.23" y="54.56" width="2.83" height="3.43"/><rect x="67.89" y="54.56" width="2.83" height="3.43"/><rect x="73.55" y="54.56" width="2.83" height="3.43"/><rect x="82.04" y="54.56" width="11.32" height="3.43"/><rect x="99.02" y="54.56" width="8.49" height="3.43"/><rect x="31.10" y="57.39" width="2.83" height="3.43"/><rect x="36.76" y="57.39" width="8.49" height="3.43"/><rect x="48.08" y="57.39" width="5.66" height="3.43"/><rect x="56.57" y="57.39" width="2.83" height="3.43"/><rect x="62.23" y="57.39" width="2.83" height="3.43"/><rect x="67.89" y="57.39" width="5.66" height="3.43"/><rect x="76.38" y="57.39" width="8.49" height="3.43"/><rect x="87.70" y="57.39" width="5.66" height="3.43"/><rect x="110.34" y="57.39" width="2.83" height="3.43"/><rect x="39.59" y="60.22" width="5.66" height="3.43"/><rect x="48.08" y="60.22" width="2.83" height="3.43"/><rect x="56.57" y="60.22" width="5.66" height="3.43"/><rect x="65.06" y="60.22" width="5.66" height="3.43"/><rect x="73.55" y="60.22" width="2.83" height="3.43"/><rect x="79.21" y="60.22" width="5.66" height="3.43"/><rect x="87.70" y="60.22" width="5.66" height="3.43"/><rect x="101.85" y="60.22" width="2.83" height="3.43"/><rect x="33.93" y="63.05" width="11.32" height="3.43"/><rect x="53.74" y="63.05" width="8.49" height="3.43"/><rect x="70.72" y="63.05" width="5.66" height="3.43"/><rect x="79.21" y="63.05" width="2.83" height="3.43"/><rect x="84.87" y="63.05" width="5.66" height="3.43"/><rect x="93.36" y="63.05" width="2.83" height="3.43"/><rect x="99.02" y="63.05" width="2.83" height="3.43"/><rect x="107.51" y="63.05" width="5.66" height="3.43"/><rect x="33.93" y="65.88" width="8.49" height="3.43"/><rect x="45.25" y="65.88" width="2.83" height="3.43"/><rect x="62.23" y="65.88" width="2.83" height="3.43"/><rect x="76.38" y="65.88" width="2.83" height="3.43"/><rect x="90.53" y="65.88" width="2.83" height="3.43"/><rect x="107.51" y="65.88" width="2.83" height="3.43"/><rect x="31.10" y="68.71" width="14.15" height="3.43"/><rect x="50.91" y="68.71" width="2.83" height="3.43"/><rect x="59.40" y="68.71" width="2.83" height="3.43"/><rect x="70.72" y="68.71" width="2.83" height="3.43"/><rect x="87.70" y="68.71" width="2.83" height="3.43"/><rect x="96.19" y="68.71" width="16.98" height="3.43"/><rect x="31.10" y="71.54" width="2.83" height="3.43"/><rect x="56.57" y="71.54" width="2.83" height="3.43"/><rect x="65.06" y="71.54" width="2.83" height="3.43"/><rect x="70.72" y="71.54" width="11.32" height="3.43"/><rect x="84.87" y="71.54" width="2.83" height="3.43"/><rect x="90.53" y="71.54" width="2.83" height="3.43"/><rect x="99.02" y="71.54" width="5.66" height="3.43"/><rect x="110.34" y="71.54" width="2.83" height="3.43"/><rect x="33.93" y="74.37" width="14.15" height="3.43"/><rect x="50.91" y="74.37" width="2.83" height="3.43"/><rect x="59.40" y="74.37" width="2.83" height="3.43"/><rect x="67.89" y="74.37" width="2.83" height="3.43"/><rect x="73.55" y="74.37" width="5.66" height="3.43"/><rect x="82.04" y="74.37" width="2.83" height="3.43"/><rect x="93.36" y="74.37" width="2.83" height="3.43"/><rect x="104.68" y="74.37" width="2.83" height="3.43"/><rect x="110.34" y="74.37" width="2.83" height="3.43"/><rect x="31.10" y="77.20" width="5.66" height="3.43"/><rect x="39.59" y="77.20" width="5.66" height="3.43"/><rect x="48.08" y="77.20" width="5.66" height="3.43"/><rect x="56.57" y="77.20" width="2.83" height="3.43"/><rect x="73.55" y="77.20" width="5.66" height="3.43"/><rect x="87.70" y="77.20" width="5.66" height="3.43"/><rect x="107.51" y="77.20" width="5.66" height="3.43"/><rect x="53.74" y="80.03" width="2.83" height="3.43"/><rect x="59.40" y="80.03" width="5.66" height="3.43"/><rect x="73.55" y="80.03" width="11.32" height="3.43"/><rect x="90.53" y="80.03" width="5.66" height="3.43"/><rect x="104.68" y="80.03" width="8.49" height="3.43"/><rect x="31.10" y="82.86" width="19.81" height="3.43"/><rect x="53.74" y="82.86" width="8.49" height="3.43"/><rect x="65.06" y="82.86" width="5.66" height="3.43"/><rect x="73.55" y="82.86" width="2.83" height="3.43"/><rect x="79.21" y="82.86" width="2.83" height="3.43"/><rect x="84.87" y="82.86" width="5.66" height="3.43"/><rect x="93.36" y="82.86" width="5.66" height="3.43"/><rect x="104.68" y="82.86" width="8.49" height="3.43"/><rect x="31.10" y="85.69" width="2.83" height="3.43"/><rect x="48.08" y="85.69" width="2.83" height="3.43"/><rect x="53.74" y="85.69" width="2.83" height="3.43"/><rect x="59.40" y="85.69" width="8.49" height="3.43"/><rect x="73.55" y="85.69" width="19.81" height="3.43"/><rect x="107.51" y="85.69" width="2.83" height="3.43"/><rect x="31.10" y="88.52" width="2.83" height="3.43"/><rect x="36.76" y="88.52" width="8.49" height="3.43"/><rect x="48.08" y="88.52" width="2.83" height="3.43"/><rect x="56.57" y="88.52" width="2.83" height="3.43"/><rect x="65.06" y="88.52" width="5.66" height="3.43"/><rect x="76.38" y="88.52" width="2.83" height="3.43"/><rect x="82.04" y="88.52" width="2.83" height="3.43"/><rect x="90.53" y="88.52" width="5.66" height="3.43"/><rect x="104.68" y="88.52" width="5.66" height="3.43"/><rect x="31.10" y="91.35" width="2.83" height="3.43"/><rect x="36.76" y="91.35" width="8.49" height="3.43"/><rect x="48.08" y="91.35" width="2.83" height="3.43"/><rect x="82.04" y="91.35" width="8.49" height="3.43"/><rect x="96.19" y="91.35" width="14.15" height="3.43"/><rect x="31.10" y="94.18" width="2.83" height="3.43"/><rect x="36.76" y="94.18" width="8.49" height="3.43"/><rect x="48.08" y="94.18" width="2.83" height="3.43"/><rect x="59.40" y="94.18" width="14.15" height="3.43"/><rect x="79.21" y="94.18" width="11.32" height="3.43"/><rect x="93.36" y="94.18" width="2.83" height="3.43"/><rect x="101.85" y="94.18" width="5.66" height="3.43"/><rect x="31.10" y="97.01" width="2.83" height="3.43"/><rect x="48.08" y="97.01" width="2.83" height="3.43"/><rect x="53.74" y="97.01" width="2.83" height="3.43"/><rect x="62.23" y="97.01" width="2.83" height="3.43"/><rect x="70.72" y="97.01" width="11.32" height="3.43"/><rect x="90.53" y="97.01" width="11.32" height="3.43"/><rect x="31.10" y="99.84" width="19.81" height="3.43"/><rect x="53.74" y="99.84" width="5.66" height="3.43"/><rect x="62.23" y="99.84" width="8.49" height="3.43"/><rect x="79.21" y="99.84" width="2.83" height="3.43"/><rect x="84.87" y="99.84" width="2.83" height="3.43"/><rect x="90.53" y="99.84" width="2.83" height="3.43"/><rect x="96.19" y="99.84" width="2.83" height="3.43"/><rect x="104.68" y="99.84" width="2.83" height="3.43"/><rect x="110.34" y="99.84" width="2.83" height="3.43"/></g>
  </svg>
 </div>
 <div class="title"><span class="pu">Tạo mã QR</span> để tiếp cận nhanh chóng</div>
 <div class="appl"><svg class="ai" width="20" height="20"><use href="#icEx"/></svg><span>Adobe Express</span></div>
</div>
<!-- cards row 2 -->
<div class="card ac" style="left:195px;top:421px;height:228px">
 <div class="thumb" style="background:#fff">
  <svg width="120" height="80" viewBox="0 0 120 80">
   <path d="M27.6 15.6 L51.5 15.6 L59.5 23.6 L59.5 55.2 C59.5 56.3 58.6 57.2 57.5 57.2 L27.6 57.2 C26.5 57.2 25.6 56.3 25.6 55.2 L25.6 17.6 C25.6 16.5 26.5 15.6 27.6 15.6 Z" fill="#f9e2de" stroke="#bf4238" stroke-width="1.9" stroke-linejoin="round"/>
   <path d="M51.5 15.6 L51.5 23.6 L59.5 23.6" fill="none" stroke="#bf4238" stroke-width="1.9" stroke-linejoin="round"/>
   <path d="M63.3 15.6 L88 15.6 L95.2 23.6 L95.2 55.2 C95.2 56.3 94.3 57.2 93.2 57.2 L63.3 57.2 C62.2 57.2 61.3 56.3 61.3 55.2 L61.3 17.6 C61.3 16.5 62.2 15.6 63.3 15.6 Z" fill="#fff" stroke="#a7adb3" stroke-width="1.9" stroke-linejoin="round"/>
   <path d="M77.8 23.5 C76.2 23.5 76.8 28.5 78.2 32 C79.8 36 84 39.5 86.8 39.2 C88.8 39 88 36.4 85 36 C81 35.5 75.5 37.5 72.5 41 C71 42.8 71 44.8 72.8 44 C75 43 77 38 78.4 33.5 C79.5 29.5 79.4 23.5 77.8 23.5 Z" fill="none" stroke="#e0261b" stroke-width="1.2" stroke-linejoin="round"/>
   <path d="M42.1 52.4 A18.1 18.1 0 0 0 78.3 52.4" fill="none" stroke="#fff" stroke-width="5"/>
   <path d="M71.4 57.6 L78.3 51.9 L83.8 58.3" fill="none" stroke="#fff" stroke-width="5" stroke-linejoin="round"/>
   <path d="M42.1 52.4 A18.1 18.1 0 0 0 78.3 52.4" fill="none" stroke="#a7adb3" stroke-width="1.9"/>
   <path d="M71.4 57.6 L78.3 51.9 L83.8 58.3" fill="none" stroke="#a7adb3" stroke-width="1.9" stroke-linejoin="round"/>
  </svg>
 </div>
 <div class="title"><span class="rd">Chuyển đổi sang PDF</span> từ Microsoft<br>Office hoặc định dạng tệp hình ảnh</div>
 <div class="appl"><svg class="ai" width="20" height="20"><use href="#icAc"/></svg><span>Acrobat</span></div>
</div>

<div class="card ex" style="left:501px;top:421px;height:228px">
 <div class="thumb" style="background:#fff">
  <svg width="120" height="80" viewBox="0 0 120 80">
   <defs>
    <pattern id="chk" x="0" y="0" width="12" height="12" patternUnits="userSpaceOnUse"><rect x="0" y="0" width="6" height="6" fill="#e2e2e4"/><rect x="6" y="6" width="6" height="6" fill="#e2e2e4"/></pattern>
    <linearGradient id="wat" x1="0" y1="0" x2="0" y2="1"><stop offset="0" stop-color="#0f1a40"/><stop offset="0.14" stop-color="#111d48"/><stop offset="0.2" stop-color="#1f5f9c"/><stop offset="0.5" stop-color="#2c86c2"/><stop offset="1" stop-color="#4aa9df"/></linearGradient>
    <linearGradient id="capg" x1="0" y1="0" x2="1" y2="0"><stop offset="0" stop-color="#f8c00c"/><stop offset="0.6" stop-color="#f4b80a"/><stop offset="0.85" stop-color="#d39a10"/><stop offset="1" stop-color="#a8782a"/></linearGradient>
    <filter id="shb"><feGaussianBlur stdDeviation="2.5"/></filter>
   </defs>
   <rect x="60" y="0" width="60" height="80" fill="url(#chk)" transform="translate(0,0)"/>
   <rect x="0" y="0" width="60" height="80" fill="url(#wat)"/>
   <path d="M0 22 C15 20 35 24 60 28 M0 32 C20 34 40 32 60 36 M0 56 C20 54 40 60 60 62 M0 70 C20 68 40 72 60 74" stroke="#1a5a94" stroke-width="2.5" fill="none" opacity="0.55"/>
   <path d="M0 36 C10 39 22 43 32 46 L31 50 C20 47 10 44 0 41 Z" fill="#dfe3e6"/>
   <ellipse cx="80" cy="60" rx="22" ry="6" fill="#888" opacity="0.45" filter="url(#shb)"/>
   <path d="M36.6 45.8 C36 38 38 26 43 18.3 C47 13 52 11 58 10.3 C66 9.6 75 11 82.4 15.6 C88 19 92 24 95 33 C97 40 97 47 96 51.3 C92 53 86 54 80.5 54 C66 52 50 48 36.6 45.8 Z" fill="url(#capg)"/>
   <path d="M17.4 62.2 C20 57 24 55 27.5 53 C32 49 37 46 41.2 44 C52 44 66 47 80.5 52.2 C80 57 78 60 75 62.2 C70 66 64 68 59.5 67.7 C52 66 44 62 36.6 60.4 C30 59.5 24 59.5 17.4 62.2 Z" fill="#f8c20e"/>
   <path d="M80 52 C86 53 92 53 96 51.3 L95 54 C90 55 84 55 78 54 Z" fill="#3a2a10" opacity="0.6"/>
   <path d="M62 34 C70 30 80 30 90 40" stroke="#d9a010" stroke-width="3" fill="none" opacity="0.7"/>
   <path d="M41.2 35.7 L46 24.7 L49.5 24.7 L53.5 35.7 L50.3 35.7 L47.6 29 L45.6 33.3 L48.6 33.3 L49.4 35.7 Z" fill="#fff"/>
  </svg>
 </div>
 <div class="title"><span class="pu">Loại bỏ nền</span> khỏi ảnh</div>
 <div class="appl"><svg class="ai" width="20" height="20"><use href="#icEx"/></svg><span>Adobe Express</span></div>
</div>

<div class="card ex" style="left:807px;top:421px;height:228px">
 <div class="thumb" style="background:#fff">
  <svg width="120" height="80" viewBox="0 0 120 80">
   <rect x="15.1" y="6.9" width="66.4" height="39.3" rx="4" fill="#9d9d9f"/>
   <path d="M16 38 C22 30 28 24 34 18 C38 14 44 12 50 12" stroke="#9a6a3a" stroke-width="3" fill="none"/>
   <ellipse cx="44" cy="12" rx="7" ry="5" fill="#3a3030"/>
   <path d="M22 46 C24 38 28 34 32 32 L32 46 Z" fill="#555"/>
   <filter id="fsh"><feGaussianBlur stdDeviation="1.2"/></filter>
   <rect x="32" y="17.5" width="81" height="56.3" rx="4.5" fill="#000" opacity="0.12" filter="url(#fsh)"/>
   <rect x="32" y="16.9" width="81" height="56.3" rx="4.5" fill="#d6d6d8"/>
   <path d="M62 30 C62 20 68 17 75 17 C82 17 87 21 87 30 L88 55 C86 62 80 64 75 64 C70 64 64 62 62 55 Z" fill="#221a1a"/>
   <path d="M46 73.2 C47 62 52 56 60 52 C66 49 84 49 92 52 C102 56 108 62 110 73.2 Z" fill="#7e7a7e"/>
   <path d="M58.6 73.2 L60 52 C68 50 84 50 92 52 L96 73.2 Z" fill="#b193e2"/>
   <ellipse cx="74" cy="33" rx="7" ry="9.5" fill="#c99078"/>
   <rect x="70" y="41" width="8" height="10" fill="#c08a70"/>
   <path d="M38 62 C42 52 50 42 57 32 M111 53 C104 46 96 38 88 31" stroke="#e2a892" stroke-width="4.5" fill="none" stroke-linecap="round"/>
   <circle cx="58" cy="31" r="3" fill="#d9a088"/><circle cx="87" cy="30.5" r="3" fill="#d9a088"/>
   <path d="M64 28.5 L84 28.5" stroke="#a8b0b4" stroke-width="1.4"/>
   <circle cx="69" cy="28.8" r="2.6" fill="#c8ccd0" stroke="#8a9094" stroke-width="0.8"/><circle cx="77.5" cy="28.8" r="2.6" fill="#c8ccd0" stroke="#8a9094" stroke-width="0.8"/>
   <circle cx="43" cy="27.9" r="6.9" fill="#fff"/><path d="M41.3 25.2 L45.6 27.9 L41.3 30.6 Z" fill="#111"/>
   <rect x="85" y="57.7" width="24" height="10.9" rx="5.45" fill="#6656e8"/>
   <text x="97" y="65.6" text-anchor="middle" font-family="Liberation Sans" font-weight="bold" font-size="7.2" fill="#fff">MP4</text>
   <path d="M9.2 46.7 C6 52 6.5 60 18 65" stroke="#7a7e82" stroke-width="1.1" fill="none"/><path d="M14.8 61.3 L18.3 65 L13.8 67.8" stroke="#7a7e82" stroke-width="1.1" fill="none"/>
  </svg>
 </div>
 <div class="title">Xuất <span class="pu">video sang định dạng MP4</span></div>
 <div class="appl"><svg class="ai" width="20" height="20"><use href="#icEx"/></svg><span>Adobe Express</span></div>
</div>

<div class="card ex" style="left:1113px;top:421px;height:228px">
 <div class="thumb" style="background:#fff">
  <svg width="120" height="80" viewBox="0 0 120 80">
   <defs><linearGradient id="lav" x1="0" y1="0" x2="0" y2="1"><stop offset="0" stop-color="#8678f0"/><stop offset="1" stop-color="#ada2f6"/></linearGradient>
   <linearGradient id="night" x1="0" y1="0" x2="0" y2="1"><stop offset="0" stop-color="#1c1450"/><stop offset="0.35" stop-color="#3a2aa0"/><stop offset="0.7" stop-color="#7a5ae8"/><stop offset="1" stop-color="#5a3ac8"/></linearGradient>
   <linearGradient id="fib" x1="0" y1="0" x2="0" y2="1"><stop offset="0" stop-color="#1a0c18"/><stop offset="0.5" stop-color="#0e1a40"/><stop offset="1" stop-color="#2060a8"/></linearGradient>
   <filter id="psh"><feGaussianBlur stdDeviation="1"/></filter></defs>
   <rect x="42" y="28.5" width="62.8" height="41.5" rx="5" fill="#000" opacity="0.1" filter="url(#psh)"/>
   <rect x="42" y="27.9" width="62.8" height="42" rx="5" fill="url(#lav)"/>
   <path d="M93 38 L97 38 M93 40.5 L97 40.5 M93 43 L97 43 M93 45.5 L97 45.5 M93 52 L97 52 M93 54.5 L97 54.5 M93 57 L97 57 M93 59.5 L97 59.5" stroke="#fff" stroke-width="0.9"/>
   <rect x="28.4" y="19.3" width="63.1" height="42" rx="6" fill="#000" opacity="0.15" filter="url(#psh)"/>
   <rect x="28.4" y="18.8" width="63.1" height="42.1" rx="6" fill="url(#fib)"/>
   <path d="M34 61 L36 50 M40 61 L41 48 M46 61 L47 50 M52 61 L54 47 M58 61 L59 49 M64 61 L66 46 M70 61 L72 48 M76 61 L78 45 M82 61 L84 40 M88 58 L89 40" stroke="#3a8ad0" stroke-width="1.1" opacity="0.9"/>
   <path d="M78 28 C82 29 86 30 91 31" stroke="#d04090" stroke-width="2"/>
   <rect x="43" y="10" width="34.8" height="41.7" rx="6" fill="#000" opacity="0.12" filter="url(#psh)"/>
   <rect x="40" y="9.6" width="37.8" height="42.1" rx="6" fill="#fff"/>
   <path d="M55.8 20.6 L70 20.6 M55.8 23.3 L70 23.3 M55.8 25.6 L70 25.6 M55.8 28.4 L70 28.4 M55.8 32.5 L70 32.5 M55.8 34.6 L70 34.6 M55.8 37.3 L70 37.3 M55.8 39.5 L70 39.5" stroke="#1a1a2a" stroke-width="0.9" stroke-dasharray="5 1 1.5 1 1.5 1"/>
   <path d="M19.7 9.6 L42 9.6 C46 14 48.5 22 48.5 30 C48.5 40 46 47 43 51.3 L19.7 51.3 C16.4 51.3 13.7 48.6 13.7 45.3 L13.7 15.6 C13.7 12.3 16.4 9.6 19.7 9.6 Z" fill="url(#night)"/>
   <circle cx="27" cy="14" r="3.5" fill="#5a70d8" opacity="0.9"/><circle cx="20" cy="21" r="3" fill="#4a88d0"/><circle cx="40" cy="21" r="3.2" fill="#4a90d8"/>
   <path d="M19 26 L19 50 M28 26 L28 50 M37 28 L37 50 M44 28 L44 48" stroke="#140c30" stroke-width="1.5"/>
   <path d="M16 45 L24 45 M30 43 L40 43" stroke="#f070b0" stroke-width="1.3"/>
  </svg>
 </div>
 <div class="title"><span class="pu">Thiết kế một bài thuyết trình</span> gây<br>ấn tượng</div>
 <div class="appl"><svg class="ai" width="20" height="20"><use href="#icEx"/></svg><span>Adobe Express</span></div>
</div>

<!-- annotation -->
<div class="abs" style="left:488px;top:409px;width:304px;height:252px;border:5px solid #f22a12"></div>
<svg class="abs" style="left:330px;top:650px" width="160" height="95" viewBox="0 0 160 95"><path d="M13 81.5 L124 22" stroke="#f22a12" stroke-width="4.6"/><path d="M144 11 L116.5 12.7 L128.5 33.5 Z" fill="#f22a12"/></svg>
<div id="foot"></div>
<div class="fh" style="left:194px;top:776px">Mua</div>
<div class="fl" style="left:194px;top:812px">Creative Cloud</div>
<div class="fl" style="left:194px;top:839px">Photoshop</div>
<div class="fl" style="left:194px;top:866px">Nhiếp ảnh</div>
<div class="fh" style="left:513px;top:776px">Hỗ trợ</div>
<div class="fl" style="left:513px;top:812px">Tải xuống và cài đặt</div>
<div class="fl" style="left:513px;top:839px">Trung tâm trợ giúp</div>
<div class="fh" style="left:832px;top:776px;letter-spacing:-0.35px">Tài khoản Adobe</div>
<div class="fl" style="left:832px;top:812px">Quản lý tài khoản của bạn</div>
<div class="fl" style="left:832px;top:839px">Đăng ký trạng thái Adobe</div>
<div class="fh" style="left:1151px;top:776px">Adobe</div>
<div class="fl" style="left:1151px;top:812px">Giới thiệu</div>
<div class="fl" style="left:1151px;top:839px">Nghề nghiệp</div>
<div class="fl" style="left:1151px;top:866px">Phòng tin tức</div>
<!-- scrollbar -->
<div class="abs" style="left:1525px;top:111px;width:1px;height:763px;background:#e9e9e9"></div>
<div class="abs" style="left:1526px;top:111px;width:13px;height:763px;background:#f9f9f9"></div>
<div class="abs" style="left:1539px;top:111px;width:1px;height:763px;background:#ececec"></div>
<div class="abs" style="left:1528px;top:456px;width:9px;height:352px;border-radius:5px;background:#c5c5c7"></div>
<!-- right panel -->
<div id="right">
 <div class="abs" style="left:24px;top:33px;font-size:14px;font-weight:bold;color:#2c2c2c;line-height:17px">Tệp gần đây</div>
 <svg class="abs" style="left:241px;top:33px" width="14" height="14" viewBox="0 0 14 14"><path d="M7 1 L7 13 M1 7 L13 7" stroke="#2c2c2c" stroke-width="1.5" stroke-linecap="round"/></svg>
 <svg class="abs" style="left:276px;top:32px" width="16" height="15" viewBox="0 0 16 15" stroke="#2c2c2c" stroke-width="1.4" stroke-linecap="round"><path d="M5.5 2 L15 2 M5.5 7.5 L15 7.5 M5.5 13 L15 13"/><path d="M1 2 L2.5 2 M1 7.5 L2.5 7.5 M1 13 L2.5 13"/></svg>
 <svg class="abs" style="left:311px;top:32px" width="18" height="15" viewBox="0 0 18 15" fill="none" stroke="#2c2c2c" stroke-width="1.4" stroke-linejoin="round"><path d="M1.7 3.9 L1.7 2.6 C1.7 1.9 2.1 1.5 2.8 1.5 L6.4 1.5 C7.2 1.5 7.8 1.9 8.2 2.6 L8.9 3.9"/><rect x="1.7" y="3.9" width="15" height="9.6" rx="1.6"/></svg>
 <div class="abs" style="left:24px;top:68px;width:148px;height:147px;border-radius:9px;background:#e4e4e4;overflow:hidden">
  <div class="abs" style="left:0;top:34px;width:148px;height:80px;background:#f1ece1"></div>
  <svg class="abs" style="left:0;top:34px" width="148" height="80" viewBox="0 0 148 80" fill="none" stroke="#1e2535" stroke-linecap="round">
   <path d="M46 48 C36 36 16 30 7 37 C0 43 4 54 16 56 C28 58 40 50 52 44" stroke-width="1"/>
   <path d="M47 23 C44 36 42 50 40 63" stroke-width="1.2"/>
   <path d="M50 30 C49 38 48 44 50 44 C52 42 54 36 58 34 C60 34 58 42 60 42 C62 40 63 36 65 36 C65 40 66 42 68 40 C70 38 72 36 74 38" stroke-width="1"/>
   <path d="M86 24 C92 18 100 22 96 30 C92 36 86 40 96 40 L148 28" stroke-width="1.1"/>
   <path d="M50 66 C80 58 110 52 148 44" stroke-width="1.3"/>
  </svg>
 </div>
 <div class="abs" style="left:24px;top:223px;font-size:13px;font-weight:bold;color:#2c2c2c;letter-spacing:-0.2px;line-height:16px">chu_ky_dep_theo_ten...</div>
 <div class="abs" style="left:24px;top:246px;font-size:11px;color:#6e6e6e;line-height:13px">PNG</div>
</div>
<!-- chat -->
<div class="abs" style="left:1820px;top:783px;width:60px;height:60px;border-radius:30px;border:2px solid #1e1e1e;background:#fff;box-shadow:0 1px 3px rgba(0,0,0,0.08)"></div>
<svg class="abs" style="left:1838px;top:802px" width="24" height="25" viewBox="0 0 24 25"><path d="M2.9 2.6 L21.1 2.6 C22.3 2.6 23 3.3 23 4.5 L23 15.8 C23 17 22.3 17.7 21.1 17.7 L13.6 17.7 L13.6 22.8 L9.3 17.7 L2.9 17.7 C1.7 17.7 1 17 1 15.8 L1 4.5 C1 3.3 1.7 2.6 2.9 2.6 Z" fill="none" stroke="#222" stroke-width="1.4" stroke-linejoin="round"/><circle cx="6.1" cy="10.4" r="1.35" fill="#222"/><circle cx="11.6" cy="10.4" r="1.35" fill="#222"/><circle cx="16.7" cy="10.4" r="1.35" fill="#222"/></svg>
<div class="abs" style="left:0;top:850px;width:1909px;height:24px;background:linear-gradient(rgba(0,0,0,0),rgba(0,0,0,0.065))"></div>
</body></html>
